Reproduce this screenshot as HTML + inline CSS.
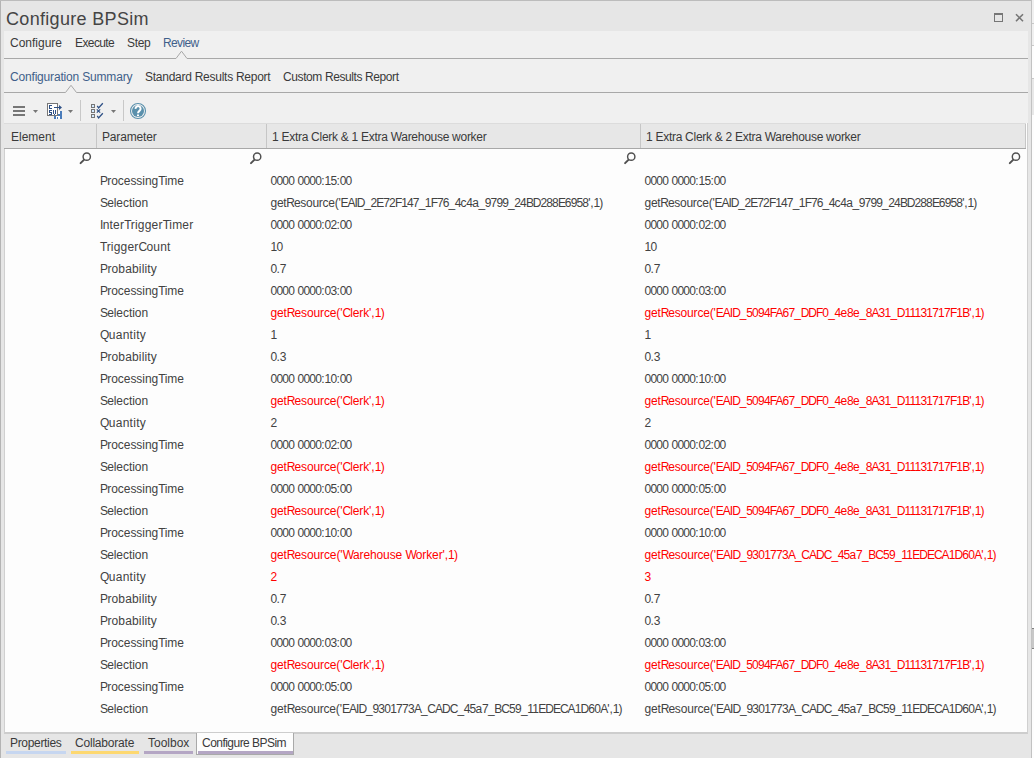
<!DOCTYPE html>
<html><head><meta charset="utf-8">
<style>
*{margin:0;padding:0;box-sizing:border-box}
html,body{width:1034px;height:758px;overflow:hidden;background:#e6e6e6;font-family:"Liberation Sans",sans-serif;font-size:12px;color:#333;position:relative}
.a{position:absolute;white-space:pre;line-height:14px}
#outside{position:absolute;left:1032px;top:0;width:2px;height:758px;background:#f0f0f0}
#bl{position:absolute;left:0;top:0;width:1px;height:758px;background:#b4b4b4}
#bt{position:absolute;left:0;top:0;width:1032px;height:1px;background:#bcbcbc}
#br{position:absolute;left:1031px;top:0;width:1px;height:758px;background:#c2c2c2}
#title{left:6px;top:9px;font-size:18px;line-height:20px;color:#444;letter-spacing:0.32px}
#panel{position:absolute;left:4px;top:31px;width:1024px;height:92px;background:#f0f0f0}
.tab{color:#3a3a3a}
.act{color:#3f5f8a}
#grid{position:absolute;left:4px;top:123px;width:1024px;height:611px;background:#fdfdfd;border:1px solid #d0d0d0;border-bottom:2px solid #cdcdcd;border-top:none}
#hdr{position:absolute;left:4px;top:123px;width:1022px;height:26px;background:#e7e7e7;border-bottom:1px solid #a8a8a8;border-top:1px solid #dcdcdc}
.vs{position:absolute;top:124px;width:1px;height:24px;background:#c6c6c6}
.c{position:absolute;white-space:pre;line-height:14px;color:#424242}
.p{left:100px}
.v1{left:270.5px}
.v2{left:644.5px}
.red{color:#f00}
.bt{position:absolute;white-space:pre;line-height:14px;color:#3a3a3a;top:736px}
.bar{position:absolute;top:751px;height:3px}
.kd{letter-spacing:calc(-0.67px + var(--k,0px))}
.ku{letter-spacing:calc(-0.9px + var(--k,0px))}
.kl{letter-spacing:calc(-0.1px + var(--k,0px))}
.k_{letter-spacing:calc(-0.3px + var(--k,0px))}
.ko{letter-spacing:calc(0px + var(--k,0px))}

</style></head><body>
<div id="outside"></div>
<div style="position:absolute;left:1032px;top:23px;width:2px;height:1px;background:#c8c8c8"></div>
<div style="position:absolute;left:1032px;top:45px;width:2px;height:713px;background:#fdfdfd;border-top:1px solid #c8c8c8"></div>
<div style="position:absolute;left:1032px;top:78px;width:2px;height:37px;background:#e8e8e8;border-top:1px solid #c8c8c8"></div>
<div style="position:absolute;left:1032px;top:628px;width:2px;height:21px;background:#c8c8c8;border-top:1px solid #808080;border-bottom:1px solid #808080"></div>
<div id="bl"></div><div id="bt"></div><div id="br"></div>
<div class="a" id="title">Configure BPSim</div>
<svg class="a" style="left:0;top:0" width="1034" height="30">
 <rect x="994.5" y="13.5" width="8" height="8" fill="none" stroke="#767676" stroke-width="1"/>
 <rect x="994" y="13" width="9" height="2" fill="#767676"/>
 <path d="M1016 14.2 L1023 21.2 M1023 14.2 L1016 21.2" stroke="#767676" stroke-width="1.6"/>
</svg>
<div id="panel"></div>
<svg class="a" style="left:0;top:0" width="1034" height="123">
 <path d="M4 58.5 H176 L181.5 51.2 L187 58.5 H1028" fill="none" stroke="#a8a8a8" stroke-width="1"/>
 <path d="M4 92.5 H65.5 L71 85.3 L76.5 92.5 H1028" fill="none" stroke="#a8a8a8" stroke-width="1"/>
 <!-- toolbar -->
 <rect x="13" y="106" width="12" height="2" fill="#767676"/>
 <rect x="13" y="110" width="12" height="2" fill="#767676"/>
 <rect x="13" y="114" width="12" height="2" fill="#767676"/>
 <path d="M33 110 H38 L35.5 113 Z" fill="#767676"/>
 <!-- csv icon -->
 <rect x="54" y="111" width="8" height="8" fill="#4a7cba"/>
 <rect x="57" y="111" width="3" height="3" fill="#fff"/>
 <rect x="56" y="116" width="4" height="3" fill="#fff"/>
 <rect x="57" y="117" width="1" height="2" fill="#4a7cba"/>
 <rect x="47.5" y="103.5" width="10" height="12" fill="#fff" stroke="#767676" stroke-width="1"/>
 <g fill="#2e5086">
  <rect x="49" y="105" width="3" height="1"/><rect x="49" y="105" width="1" height="4"/><rect x="49" y="108" width="3" height="1"/>
  <rect x="49" y="110" width="3" height="1"/><rect x="49" y="110" width="1" height="3"/><rect x="49" y="112" width="3" height="1"/><rect x="51" y="112" width="1" height="3"/><rect x="49" y="114" width="3" height="1"/>
  <rect x="53" y="110" width="1" height="4"/><rect x="55" y="110" width="1" height="4"/><rect x="54" y="114" width="1" height="1"/>
 </g>
 <path d="M54 107.5 H61" stroke="#2e5086" stroke-width="1"/>
 <path d="M59 105 L62 107.5 L59 110 Z" fill="#2e5086"/>
 <path d="M68 110 H73 L70.5 113 Z" fill="#767676"/>
 <rect x="80" y="100" width="1" height="21" fill="#c8c8c8"/>
 <!-- checklist -->
 <rect x="91.5" y="104.5" width="3" height="3" fill="#d4eaff" stroke="#767676" stroke-width="1"/>
 <rect x="91.5" y="109.5" width="3" height="3" fill="#d4eaff" stroke="#767676" stroke-width="1"/>
 <rect x="91.5" y="114.5" width="3" height="3" fill="#d4eaff" stroke="#767676" stroke-width="1"/>
 <path d="M97.3 105.8 L98.6 108 L102.8 103.3" fill="none" stroke="#2e5086" stroke-width="1.3"/>
 <path d="M97.3 115.8 L98.6 118 L102.8 113.3" fill="none" stroke="#2e5086" stroke-width="1.3"/>
 <path d="M96.8 109.3 L100.2 112.7 M100.2 109.3 L96.8 112.7" fill="none" stroke="#2e5086" stroke-width="1.2"/>
 <path d="M111 110 H116 L113.5 113 Z" fill="#767676"/>
 <rect x="123" y="100" width="1" height="21" fill="#c8c8c8"/>
 <!-- help -->
 <circle cx="138" cy="111" r="7.5" fill="none" stroke="#5b91ad" stroke-width="1.1"/>
 <circle cx="138" cy="111" r="6" fill="#5a90ac"/>
 <path d="M135.6 108.8 A2.5 2.5 0 1 1 139.6 110.6 C138.3 111.6 138 112 138 113.3" fill="none" stroke="#fff" stroke-width="2"/>
 <rect x="137" y="114.5" width="2" height="1.6" fill="#fff"/>
</svg>
<div class="a tab" style="left:10px;top:36px">Configure</div>
<div class="a tab" style="left:75px;top:36px;letter-spacing:-0.6px">Execute</div>
<div class="a tab" style="left:127px;top:36px;letter-spacing:-0.3px">Step</div>
<div class="a tab act" style="left:163px;top:36px;letter-spacing:-0.65px">Review</div>
<div class="a tab act" style="left:10px;top:70px;letter-spacing:-0.18px">Configuration Summary</div>
<div class="a tab" style="left:145px;top:70px;letter-spacing:-0.26px">Standard Results Report</div>
<div class="a tab" style="left:283px;top:70px;letter-spacing:-0.4px">Custom Results Report</div>
<div id="grid"></div>
<div id="hdr"></div>
<div class="vs" style="left:96px"></div>
<div class="vs" style="left:266px"></div>
<div class="vs" style="left:640px"></div>
<div class="vs" style="left:1025px"></div>
<div class="a tab" style="left:11px;top:130px">Element</div>
<div class="a tab" style="left:102px;top:130px;letter-spacing:-0.17px">Parameter</div>
<div class="a tab" style="left:272px;top:130px;letter-spacing:-0.28px">1 Extra Clerk &amp; 1 Extra Warehouse worker</div>
<div class="a tab" style="left:646px;top:130px;letter-spacing:-0.28px">1 Extra Clerk &amp; 2 Extra Warehouse worker</div>
<svg class="a" style="left:0;top:149px" width="1034" height="20">
 <g id="mg" fill="none" stroke="#505050">
  <circle cx="86.75" cy="7.65" r="3.65" stroke-width="1.45"/>
  <path d="M83.9 10.9 L80.6 14.1" stroke-width="2" stroke-linecap="round"/>
 </g>
 <use href="#mg" x="170.4"/>
 <use href="#mg" x="544.5"/>
 <use href="#mg" x="929.2"/>
</svg>
<div class="bar" style="left:6px;width:60px;background:#c6d6f0"></div>
<div class="bar" style="left:71px;width:68px;background:#fdd870"></div>
<div class="bar" style="left:144px;width:49px;background:#b4a6c4"></div>
<div style="position:absolute;left:196px;top:733px;width:98px;height:22px;background:#fdfdfd;border:1px solid #a9a9a9;border-top:none"></div>
<div class="bar" style="left:198px;width:95px;background:#b4a6c4"></div>
<div class="bt" style="left:10px;letter-spacing:-0.32px">Properties</div>
<div class="bt" style="left:75px;letter-spacing:-0.2px">Collaborate</div>
<div class="bt" style="left:148px">Toolbox</div>
<div class="bt" style="left:202px;letter-spacing:-0.53px">Configure BPSim</div>

<div class="c p" style="top:174px;--k:0.067px"><span class="ku">P</span><span class="kl">rocessing</span><span class="ku">T</span><span class="kl">ime</span></div>
<div class="c v1" style="top:174px;--k:-0.073px"><span class="kd">0000</span><span class="ko"> </span><span class="kd">0000</span><span class="ko">:</span><span class="kd">15</span><span class="ko">:</span><span class="kd">00</span></div>
<div class="c v2" style="top:174px;--k:-0.073px"><span class="kd">0000</span><span class="ko"> </span><span class="kd">0000</span><span class="ko">:</span><span class="kd">15</span><span class="ko">:</span><span class="kd">00</span></div>
<div class="c p" style="top:196px;--k:0.036px"><span class="ku">S</span><span class="kl">election</span></div>
<div class="c v1" style="top:196px;--k:-0.182px"><span class="kl">get</span><span class="ku">R</span><span class="kl">esource</span><span class="ko">('</span><span class="ku">EAID</span><span class="k_">_</span><span class="kd">2</span><span class="ku">E</span><span class="kd">72</span><span class="ku">F</span><span class="kd">147</span><span class="k_">_</span><span class="kd">1</span><span class="ku">F</span><span class="kd">76</span><span class="k_">_</span><span class="kd">4</span><span class="kl">c</span><span class="kd">4</span><span class="kl">a</span><span class="k_">_</span><span class="kd">9799</span><span class="k_">_</span><span class="kd">24</span><span class="ku">BD</span><span class="kd">288</span><span class="ku">E</span><span class="kd">6958</span><span class="ko">',</span><span class="kd">1</span><span class="ko">)</span></div>
<div class="c v2" style="top:196px;--k:-0.182px"><span class="kl">get</span><span class="ku">R</span><span class="kl">esource</span><span class="ko">('</span><span class="ku">EAID</span><span class="k_">_</span><span class="kd">2</span><span class="ku">E</span><span class="kd">72</span><span class="ku">F</span><span class="kd">147</span><span class="k_">_</span><span class="kd">1</span><span class="ku">F</span><span class="kd">76</span><span class="k_">_</span><span class="kd">4</span><span class="kl">c</span><span class="kd">4</span><span class="kl">a</span><span class="k_">_</span><span class="kd">9799</span><span class="k_">_</span><span class="kd">24</span><span class="ku">BD</span><span class="kd">288</span><span class="ku">E</span><span class="kd">6958</span><span class="ko">',</span><span class="kd">1</span><span class="ko">)</span></div>
<div class="c p" style="top:218px;--k:0.281px"><span class="ku">I</span><span class="kl">nter</span><span class="ku">T</span><span class="kl">rigger</span><span class="ku">T</span><span class="kl">imer</span></div>
<div class="c v1" style="top:218px;--k:-0.073px"><span class="kd">0000</span><span class="ko"> </span><span class="kd">0000</span><span class="ko">:</span><span class="kd">02</span><span class="ko">:</span><span class="kd">00</span></div>
<div class="c v2" style="top:218px;--k:-0.073px"><span class="kd">0000</span><span class="ko"> </span><span class="kd">0000</span><span class="ko">:</span><span class="kd">02</span><span class="ko">:</span><span class="kd">00</span></div>
<div class="c p" style="top:240px;--k:0.268px"><span class="ku">T</span><span class="kl">rigger</span><span class="ku">C</span><span class="kl">ount</span></div>
<div class="c v1" style="top:240px;--k:0px"><span class="kd">10</span></div>
<div class="c v2" style="top:240px;--k:0px"><span class="kd">10</span></div>
<div class="c p" style="top:262px;--k:0.26px"><span class="ku">P</span><span class="kl">robability</span></div>
<div class="c v1" style="top:262px;--k:0px"><span class="kd">0</span><span class="ko">.</span><span class="kd">7</span></div>
<div class="c v2" style="top:262px;--k:0px"><span class="kd">0</span><span class="ko">.</span><span class="kd">7</span></div>
<div class="c p" style="top:284px;--k:0.067px"><span class="ku">P</span><span class="kl">rocessing</span><span class="ku">T</span><span class="kl">ime</span></div>
<div class="c v1" style="top:284px;--k:-0.073px"><span class="kd">0000</span><span class="ko"> </span><span class="kd">0000</span><span class="ko">:</span><span class="kd">03</span><span class="ko">:</span><span class="kd">00</span></div>
<div class="c v2" style="top:284px;--k:-0.073px"><span class="kd">0000</span><span class="ko"> </span><span class="kd">0000</span><span class="ko">:</span><span class="kd">03</span><span class="ko">:</span><span class="kd">00</span></div>
<div class="c p" style="top:306px;--k:0.036px"><span class="ku">S</span><span class="kl">election</span></div>
<div class="c v1 red" style="top:306px;--k:-0.033px"><span class="kl">get</span><span class="ku">R</span><span class="kl">esource</span><span class="ko">('</span><span class="ku">C</span><span class="kl">lerk</span><span class="ko">',</span><span class="kd">1</span><span class="ko">)</span></div>
<div class="c v2 red" style="top:306px;--k:-0.09px"><span class="kl">get</span><span class="ku">R</span><span class="kl">esource</span><span class="ko">('</span><span class="ku">EAID</span><span class="k_">_</span><span class="kd">5094</span><span class="ku">FA</span><span class="kd">67</span><span class="k_">_</span><span class="ku">DDF</span><span class="kd">0</span><span class="k_">_</span><span class="kd">4</span><span class="kl">e</span><span class="kd">8</span><span class="kl">e</span><span class="k_">_</span><span class="kd">8</span><span class="ku">A</span><span class="kd">31</span><span class="k_">_</span><span class="ku">D</span><span class="kd">11131717</span><span class="ku">F</span><span class="kd">1</span><span class="ku">B</span><span class="ko">',</span><span class="kd">1</span><span class="ko">)</span></div>
<div class="c p" style="top:328px;--k:0.363px"><span class="ku">Q</span><span class="kl">uantity</span></div>
<div class="c v1" style="top:328px;--k:0px"><span class="kd">1</span></div>
<div class="c v2" style="top:328px;--k:0px"><span class="kd">1</span></div>
<div class="c p" style="top:350px;--k:0.26px"><span class="ku">P</span><span class="kl">robability</span></div>
<div class="c v1" style="top:350px;--k:0px"><span class="kd">0</span><span class="ko">.</span><span class="kd">3</span></div>
<div class="c v2" style="top:350px;--k:0px"><span class="kd">0</span><span class="ko">.</span><span class="kd">3</span></div>
<div class="c p" style="top:372px;--k:0.067px"><span class="ku">P</span><span class="kl">rocessing</span><span class="ku">T</span><span class="kl">ime</span></div>
<div class="c v1" style="top:372px;--k:-0.073px"><span class="kd">0000</span><span class="ko"> </span><span class="kd">0000</span><span class="ko">:</span><span class="kd">10</span><span class="ko">:</span><span class="kd">00</span></div>
<div class="c v2" style="top:372px;--k:-0.073px"><span class="kd">0000</span><span class="ko"> </span><span class="kd">0000</span><span class="ko">:</span><span class="kd">10</span><span class="ko">:</span><span class="kd">00</span></div>
<div class="c p" style="top:394px;--k:0.036px"><span class="ku">S</span><span class="kl">election</span></div>
<div class="c v1 red" style="top:394px;--k:-0.033px"><span class="kl">get</span><span class="ku">R</span><span class="kl">esource</span><span class="ko">('</span><span class="ku">C</span><span class="kl">lerk</span><span class="ko">',</span><span class="kd">1</span><span class="ko">)</span></div>
<div class="c v2 red" style="top:394px;--k:-0.09px"><span class="kl">get</span><span class="ku">R</span><span class="kl">esource</span><span class="ko">('</span><span class="ku">EAID</span><span class="k_">_</span><span class="kd">5094</span><span class="ku">FA</span><span class="kd">67</span><span class="k_">_</span><span class="ku">DDF</span><span class="kd">0</span><span class="k_">_</span><span class="kd">4</span><span class="kl">e</span><span class="kd">8</span><span class="kl">e</span><span class="k_">_</span><span class="kd">8</span><span class="ku">A</span><span class="kd">31</span><span class="k_">_</span><span class="ku">D</span><span class="kd">11131717</span><span class="ku">F</span><span class="kd">1</span><span class="ku">B</span><span class="ko">',</span><span class="kd">1</span><span class="ko">)</span></div>
<div class="c p" style="top:416px;--k:0.363px"><span class="ku">Q</span><span class="kl">uantity</span></div>
<div class="c v1" style="top:416px;--k:0px"><span class="kd">2</span></div>
<div class="c v2" style="top:416px;--k:0px"><span class="kd">2</span></div>
<div class="c p" style="top:438px;--k:0.067px"><span class="ku">P</span><span class="kl">rocessing</span><span class="ku">T</span><span class="kl">ime</span></div>
<div class="c v1" style="top:438px;--k:-0.073px"><span class="kd">0000</span><span class="ko"> </span><span class="kd">0000</span><span class="ko">:</span><span class="kd">02</span><span class="ko">:</span><span class="kd">00</span></div>
<div class="c v2" style="top:438px;--k:-0.073px"><span class="kd">0000</span><span class="ko"> </span><span class="kd">0000</span><span class="ko">:</span><span class="kd">02</span><span class="ko">:</span><span class="kd">00</span></div>
<div class="c p" style="top:460px;--k:0.036px"><span class="ku">S</span><span class="kl">election</span></div>
<div class="c v1 red" style="top:460px;--k:-0.033px"><span class="kl">get</span><span class="ku">R</span><span class="kl">esource</span><span class="ko">('</span><span class="ku">C</span><span class="kl">lerk</span><span class="ko">',</span><span class="kd">1</span><span class="ko">)</span></div>
<div class="c v2 red" style="top:460px;--k:-0.09px"><span class="kl">get</span><span class="ku">R</span><span class="kl">esource</span><span class="ko">('</span><span class="ku">EAID</span><span class="k_">_</span><span class="kd">5094</span><span class="ku">FA</span><span class="kd">67</span><span class="k_">_</span><span class="ku">DDF</span><span class="kd">0</span><span class="k_">_</span><span class="kd">4</span><span class="kl">e</span><span class="kd">8</span><span class="kl">e</span><span class="k_">_</span><span class="kd">8</span><span class="ku">A</span><span class="kd">31</span><span class="k_">_</span><span class="ku">D</span><span class="kd">11131717</span><span class="ku">F</span><span class="kd">1</span><span class="ku">B</span><span class="ko">',</span><span class="kd">1</span><span class="ko">)</span></div>
<div class="c p" style="top:482px;--k:0.067px"><span class="ku">P</span><span class="kl">rocessing</span><span class="ku">T</span><span class="kl">ime</span></div>
<div class="c v1" style="top:482px;--k:-0.073px"><span class="kd">0000</span><span class="ko"> </span><span class="kd">0000</span><span class="ko">:</span><span class="kd">05</span><span class="ko">:</span><span class="kd">00</span></div>
<div class="c v2" style="top:482px;--k:-0.073px"><span class="kd">0000</span><span class="ko"> </span><span class="kd">0000</span><span class="ko">:</span><span class="kd">05</span><span class="ko">:</span><span class="kd">00</span></div>
<div class="c p" style="top:504px;--k:0.036px"><span class="ku">S</span><span class="kl">election</span></div>
<div class="c v1 red" style="top:504px;--k:-0.033px"><span class="kl">get</span><span class="ku">R</span><span class="kl">esource</span><span class="ko">('</span><span class="ku">C</span><span class="kl">lerk</span><span class="ko">',</span><span class="kd">1</span><span class="ko">)</span></div>
<div class="c v2 red" style="top:504px;--k:-0.09px"><span class="kl">get</span><span class="ku">R</span><span class="kl">esource</span><span class="ko">('</span><span class="ku">EAID</span><span class="k_">_</span><span class="kd">5094</span><span class="ku">FA</span><span class="kd">67</span><span class="k_">_</span><span class="ku">DDF</span><span class="kd">0</span><span class="k_">_</span><span class="kd">4</span><span class="kl">e</span><span class="kd">8</span><span class="kl">e</span><span class="k_">_</span><span class="kd">8</span><span class="ku">A</span><span class="kd">31</span><span class="k_">_</span><span class="ku">D</span><span class="kd">11131717</span><span class="ku">F</span><span class="kd">1</span><span class="ku">B</span><span class="ko">',</span><span class="kd">1</span><span class="ko">)</span></div>
<div class="c p" style="top:526px;--k:0.067px"><span class="ku">P</span><span class="kl">rocessing</span><span class="ku">T</span><span class="kl">ime</span></div>
<div class="c v1" style="top:526px;--k:-0.073px"><span class="kd">0000</span><span class="ko"> </span><span class="kd">0000</span><span class="ko">:</span><span class="kd">10</span><span class="ko">:</span><span class="kd">00</span></div>
<div class="c v2" style="top:526px;--k:-0.073px"><span class="kd">0000</span><span class="ko"> </span><span class="kd">0000</span><span class="ko">:</span><span class="kd">10</span><span class="ko">:</span><span class="kd">00</span></div>
<div class="c p" style="top:548px;--k:0.036px"><span class="ku">S</span><span class="kl">election</span></div>
<div class="c v1 red" style="top:548px;--k:-0.025px"><span class="kl">get</span><span class="ku">R</span><span class="kl">esource</span><span class="ko">('</span><span class="ku">W</span><span class="kl">arehouse</span><span class="ko"> </span><span class="ku">W</span><span class="kl">orker</span><span class="ko">',</span><span class="kd">1</span><span class="ko">)</span></div>
<div class="c v2 red" style="top:548px;--k:-0.075px"><span class="kl">get</span><span class="ku">R</span><span class="kl">esource</span><span class="ko">('</span><span class="ku">EAID</span><span class="k_">_</span><span class="kd">9301773</span><span class="ku">A</span><span class="k_">_</span><span class="ku">CADC</span><span class="k_">_</span><span class="kd">45</span><span class="kl">a</span><span class="kd">7</span><span class="k_">_</span><span class="ku">BC</span><span class="kd">59</span><span class="k_">_</span><span class="kd">11</span><span class="ku">EDECA</span><span class="kd">1</span><span class="ku">D</span><span class="kd">60</span><span class="ku">A</span><span class="ko">',</span><span class="kd">1</span><span class="ko">)</span></div>
<div class="c p" style="top:570px;--k:0.363px"><span class="ku">Q</span><span class="kl">uantity</span></div>
<div class="c v1 red" style="top:570px;--k:0px"><span class="kd">2</span></div>
<div class="c v2 red" style="top:570px;--k:0px"><span class="kd">3</span></div>
<div class="c p" style="top:592px;--k:0.26px"><span class="ku">P</span><span class="kl">robability</span></div>
<div class="c v1" style="top:592px;--k:0px"><span class="kd">0</span><span class="ko">.</span><span class="kd">7</span></div>
<div class="c v2" style="top:592px;--k:0px"><span class="kd">0</span><span class="ko">.</span><span class="kd">7</span></div>
<div class="c p" style="top:614px;--k:0.26px"><span class="ku">P</span><span class="kl">robability</span></div>
<div class="c v1" style="top:614px;--k:0px"><span class="kd">0</span><span class="ko">.</span><span class="kd">3</span></div>
<div class="c v2" style="top:614px;--k:0px"><span class="kd">0</span><span class="ko">.</span><span class="kd">3</span></div>
<div class="c p" style="top:636px;--k:0.067px"><span class="ku">P</span><span class="kl">rocessing</span><span class="ku">T</span><span class="kl">ime</span></div>
<div class="c v1" style="top:636px;--k:-0.073px"><span class="kd">0000</span><span class="ko"> </span><span class="kd">0000</span><span class="ko">:</span><span class="kd">03</span><span class="ko">:</span><span class="kd">00</span></div>
<div class="c v2" style="top:636px;--k:-0.073px"><span class="kd">0000</span><span class="ko"> </span><span class="kd">0000</span><span class="ko">:</span><span class="kd">03</span><span class="ko">:</span><span class="kd">00</span></div>
<div class="c p" style="top:658px;--k:0.036px"><span class="ku">S</span><span class="kl">election</span></div>
<div class="c v1 red" style="top:658px;--k:-0.033px"><span class="kl">get</span><span class="ku">R</span><span class="kl">esource</span><span class="ko">('</span><span class="ku">C</span><span class="kl">lerk</span><span class="ko">',</span><span class="kd">1</span><span class="ko">)</span></div>
<div class="c v2 red" style="top:658px;--k:-0.09px"><span class="kl">get</span><span class="ku">R</span><span class="kl">esource</span><span class="ko">('</span><span class="ku">EAID</span><span class="k_">_</span><span class="kd">5094</span><span class="ku">FA</span><span class="kd">67</span><span class="k_">_</span><span class="ku">DDF</span><span class="kd">0</span><span class="k_">_</span><span class="kd">4</span><span class="kl">e</span><span class="kd">8</span><span class="kl">e</span><span class="k_">_</span><span class="kd">8</span><span class="ku">A</span><span class="kd">31</span><span class="k_">_</span><span class="ku">D</span><span class="kd">11131717</span><span class="ku">F</span><span class="kd">1</span><span class="ku">B</span><span class="ko">',</span><span class="kd">1</span><span class="ko">)</span></div>
<div class="c p" style="top:680px;--k:0.067px"><span class="ku">P</span><span class="kl">rocessing</span><span class="ku">T</span><span class="kl">ime</span></div>
<div class="c v1" style="top:680px;--k:-0.073px"><span class="kd">0000</span><span class="ko"> </span><span class="kd">0000</span><span class="ko">:</span><span class="kd">05</span><span class="ko">:</span><span class="kd">00</span></div>
<div class="c v2" style="top:680px;--k:-0.073px"><span class="kd">0000</span><span class="ko"> </span><span class="kd">0000</span><span class="ko">:</span><span class="kd">05</span><span class="ko">:</span><span class="kd">00</span></div>
<div class="c p" style="top:702px;--k:0.036px"><span class="ku">S</span><span class="kl">election</span></div>
<div class="c v1" style="top:702px;--k:-0.075px"><span class="kl">get</span><span class="ku">R</span><span class="kl">esource</span><span class="ko">('</span><span class="ku">EAID</span><span class="k_">_</span><span class="kd">9301773</span><span class="ku">A</span><span class="k_">_</span><span class="ku">CADC</span><span class="k_">_</span><span class="kd">45</span><span class="kl">a</span><span class="kd">7</span><span class="k_">_</span><span class="ku">BC</span><span class="kd">59</span><span class="k_">_</span><span class="kd">11</span><span class="ku">EDECA</span><span class="kd">1</span><span class="ku">D</span><span class="kd">60</span><span class="ku">A</span><span class="ko">',</span><span class="kd">1</span><span class="ko">)</span></div>
<div class="c v2" style="top:702px;--k:-0.075px"><span class="kl">get</span><span class="ku">R</span><span class="kl">esource</span><span class="ko">('</span><span class="ku">EAID</span><span class="k_">_</span><span class="kd">9301773</span><span class="ku">A</span><span class="k_">_</span><span class="ku">CADC</span><span class="k_">_</span><span class="kd">45</span><span class="kl">a</span><span class="kd">7</span><span class="k_">_</span><span class="ku">BC</span><span class="kd">59</span><span class="k_">_</span><span class="kd">11</span><span class="ku">EDECA</span><span class="kd">1</span><span class="ku">D</span><span class="kd">60</span><span class="ku">A</span><span class="ko">',</span><span class="kd">1</span><span class="ko">)</span></div>
</body></html>
